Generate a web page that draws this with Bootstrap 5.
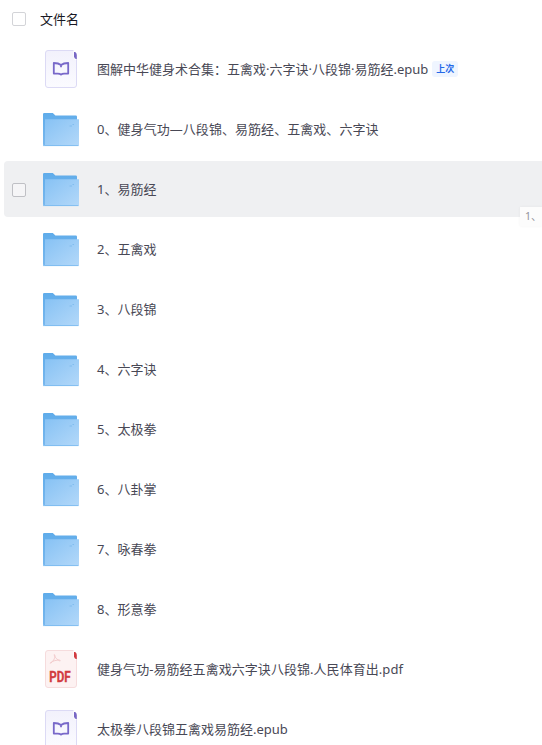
<!DOCTYPE html>
<html lang="zh-CN">
<head>
<meta charset="utf-8">
<meta name="viewport" content="width=device-width, initial-scale=1">
<title>文件列表</title>
<link href="https://cdn.jsdelivr.net/npm/bootstrap@5.3.0/dist/css/bootstrap.min.css" rel="stylesheet">
<style>
body{font-family:"Noto Sans","Noto Sans CJK SC",sans-serif;font-size:13px;line-height:20px;color:#484855;background:#fff;height:745px;overflow:hidden}
.head-row{height:39px;padding-left:12px;padding-bottom:1px;color:#181824}
.file-row{height:56px;margin:2px 0 2px 4px;padding-left:8px;border-radius:4px 0 0 4px}
.file-row.is-hover{background:#eff0f2}
.files{height:706px}
.tick{width:14px;height:14px;border:1px solid #d3d4d8;border-radius:2px;background:#fff}
.is-hover .tick{border-color:#bfc0c5;background:#f5f5f7;margin-top:2px}
.tick.ghost{visibility:hidden}
.head-name{margin-left:14px}
.file-icon{width:40px;height:40px;margin-left:15px}
.file-name{margin-left:16px}
.file-name.loose{letter-spacing:.05px}
.last-tag{height:16px;margin-left:4px;padding:0 4px;border-radius:3px;background:#eff5ff;color:#2468e8;font-size:9px;line-height:16px;font-weight:700}
.drag-tip{right:0;top:207px;width:22px;height:19px;background:rgba(252,252,252,.96);box-shadow:0 0 3px rgba(0,0,0,.05);color:#92939a;font-size:10.5px;line-height:19px;padding-left:5px}
</style>
</head>
<body>
<svg class="position-absolute" width="0" height="0" aria-hidden="true">
  <defs>
    <linearGradient id="gBack" x1="0" y1="0" x2="0" y2="1"><stop offset="0" stop-color="#60acea"/><stop offset="1" stop-color="#79b8ee"/></linearGradient>
    <linearGradient id="gFront" x1="0" y1="0" x2="1" y2="1"><stop offset="0" stop-color="#87c2f4"/><stop offset="1" stop-color="#b3d8f9"/></linearGradient>
    <linearGradient id="gPage" x1="0" y1="0" x2="0" y2="1"><stop offset="0" stop-color="#f2f1fc"/><stop offset="1" stop-color="#fbfbff"/></linearGradient>
  </defs>
</svg>
<main class="position-relative overflow-hidden">
  <header class="head-row d-flex align-items-center"><span class="tick"></span><span class="head-name">文件名</span></header>
  <div id="files" class="files overflow-hidden"></div>
  <div class="drag-tip position-absolute overflow-hidden text-nowrap">1、</div>
</main>
<template id="folder"><svg class="file-icon flex-shrink-0" viewBox="0 0 40 40">
  <path d="M2 5.2Q2 4 3.2 4H11.8L14.4 6.5H34.8Q36 6.5 36 7.7V36.5H3.2Q2 36.5 2 35.3Z" fill="url(#gBack)"/>
  <path d="M4 10.3H38V35.8Q38 37 36.8 37H4Z" fill="url(#gFront)"/>
  <path d="M2 36.6H37.5" stroke="#73b6ee" stroke-width=".8"/>
  <path d="M28.5 17H31M31.5 15.5H33" stroke="#79b9ee" stroke-width=".8"/>
</svg></template>
<template id="epub"><svg class="file-icon flex-shrink-0" viewBox="0 0 40 40">
  <rect x="4.5" y="1.5" width="31" height="37" rx="2.5" fill="url(#gPage)" stroke="#dcdaf5"/>
  <path d="M32.5 1H36V11H34.2Q32.5 10.5 32.5 8Z" fill="#fff"/>
  <path d="M33 3H34.2Q35.8 4 35.8 6V10.4Q33 9.8 33 7.6Z" fill="#7868c5"/>
  <path d="M20 16Q17.5 14 12.8 14V24.6H16.8Q19 24.6 20 25.6Q21 24.6 23.2 24.6H27.2V14Q22.5 14 20 16V18.2" fill="none" stroke="#7868c9" stroke-width="1.8" stroke-linejoin="round"/>
</svg></template>
<template id="pdf"><svg class="file-icon flex-shrink-0" viewBox="0 0 40 40">
  <rect x="4.5" y="1.5" width="31" height="37" rx="2.5" fill="#fdf2f2" stroke="#f6dcdd"/>
  <path d="M32.5 1H36V11H34.2Q32.5 10.5 32.5 8Z" fill="#fff"/>
  <path d="M33 3H34.2Q35.8 4 35.8 6V10.4Q33 9.8 33 7.6Z" fill="#d23b40"/>
  <path d="M9.2 14.2C11.5 13.8 14.5 9 13.8 6.2C12.8 3.8 12.6 8.6 18.5 11.8C20 12.3 19.5 10.5 16 11.2C13 11.6 10 12.6 9.2 14.2Z" fill="none" stroke="#f3cccd" stroke-width="1"/>
  <text x="8.2" y="33" textLength="21.5" lengthAdjust="spacingAndGlyphs" font-family="Roboto,sans-serif" font-weight="700" font-size="14" fill="#d23b40" stroke="#d23b40" stroke-width=".3">PDF</text>
</svg></template>
<script>
const files=[
 ['epub','图解中华健身术合集：五禽戏·六字诀·八段锦·易筋经.epub'],
 ['folder','0、健身气功—八段锦、易筋经、五禽戏、六字诀'],
 ['folder','1、易筋经'],['folder','2、五禽戏'],['folder','3、八段锦'],['folder','4、六字诀'],
 ['folder','5、太极拳'],['folder','6、八卦掌'],['folder','7、咏春拳'],['folder','8、形意拳'],
 ['pdf','健身气功-易筋经五禽戏六字诀八段锦.人民体育出.pdf'],
 ['epub','太极拳八段锦五禽戏易筋经.epub']];
document.getElementById('files').innerHTML=files.map(([kind,name],i)=>
 `<div class="d-flex flex-column"><div class="file-row d-flex align-items-center text-nowrap ${i===2?'is-hover':''}"><span class="tick flex-shrink-0 ${i===2?'':'ghost'}"></span>${document.getElementById(kind).innerHTML}<span class="file-name ${i===1||i===10?'loose':''}">${name}</span>${i===0?'<span class="last-tag">上次</span>':''}</div></div>`).join('');
</script>
<script src="https://cdn.jsdelivr.net/npm/bootstrap@5.3.0/dist/js/bootstrap.bundle.min.js"></script>
</body>
</html>
